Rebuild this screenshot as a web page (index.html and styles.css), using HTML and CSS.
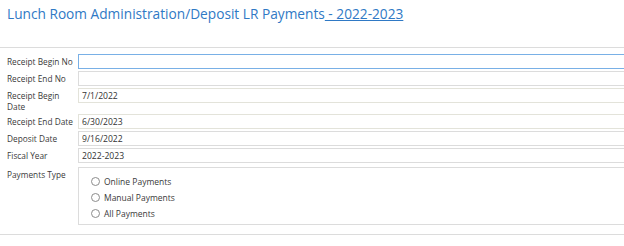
FILE: index.html
```html
<!DOCTYPE html>
<html lang="en">
  <head>
    <meta charset="UTF-8" />
    <title>Deposit LR Payments</title>
    <link rel="stylesheet" href="styles.css">
  </head>
  <body>
    <div class="page-header">
      <h1 class="page-title">
        Lunch Room Administration/Deposit LR Payments<a class="year-link" href="#"> - 2022-2023</a>
      </h1>
    </div>

    <form class="deposit-form">
      <div class="form-row">
        <label class="field-label" for="begin-no">Receipt Begin No</label>
        <input class="field-input field-focus" id="begin-no" type="text" value="" />
      </div>
      <div class="form-row">
        <label class="field-label" for="end-no">Receipt End No</label>
        <input class="field-input" id="end-no" type="text" value="" />
      </div>
      <div class="form-row row-tall">
        <label class="field-label" for="begin-date">Receipt Begin Date</label>
        <input class="field-input field-warm" id="begin-date" type="text" value="7/1/2022" />
      </div>
      <div class="form-row">
        <label class="field-label" for="end-date">Receipt End Date</label>
        <input class="field-input field-warm" id="end-date" type="text" value="6/30/2023" />
      </div>
      <div class="form-row">
        <label class="field-label" for="deposit-date">Deposit Date</label>
        <input class="field-input" id="deposit-date" type="text" value="9/16/2022" />
      </div>
      <div class="form-row">
        <label class="field-label" for="fiscal-year">Fiscal Year</label>
        <input class="field-input" id="fiscal-year" type="text" value="2022-2023" />
      </div>
      <div class="form-row row-radios">
        <span class="field-label">Payments Type</span>
        <div class="radio-box">
          <label class="radio-item"><input class="radio" type="radio" name="ptype" /> Online Payments</label>
          <label class="radio-item"><input class="radio" type="radio" name="ptype" /> Manual Payments</label>
          <label class="radio-item"><input class="radio" type="radio" name="ptype" /> All Payments</label>
        </div>
      </div>
    </form>
  </body>
</html>
```

FILE: styles.css
```css
:root {
  --title-blue: #2f79c5;
  --label-text: #3a3a3a;
  --line: #dcdcdc;
  --line-warm: #e3e3da;
  --focus: #79b0e6;
}

* {
  margin: 0;
  padding: 0;
  box-sizing: border-box;
}

body {
  font-family: "Open Sans", "Noto Sans", sans-serif;
  background: #ffffff;
  color: var(--label-text);
  overflow: hidden;
}

.page-header {
  height: 48px;
  border-bottom: 1px solid var(--line);
  padding: 4px 0 0 7px;
}

.page-title {
  font-size: 13.7px;
  font-weight: 400;
  line-height: 20px;
  color: var(--title-blue);
  white-space: nowrap;
}

.year-link {
  color: var(--title-blue);
  text-decoration: underline;
}

.deposit-form {
  display: flex;
  flex-direction: column;
  gap: 2px;
  padding: 6px 0 9px;
  border-bottom: 1px solid var(--line);
}

.form-row {
  display: grid;
  grid-template-columns: 78px 580px;
  align-items: start;
}

.field-label {
  padding: 2px 0 0 7px;
  font-size: 8.3px;
  line-height: 11px;
  white-space: nowrap;
  color: var(--label-text);
}

.row-tall {
  height: 24px;
}

.row-tall .field-label {
  white-space: normal;
  padding-right: 14px;
}

.field-input {
  height: 15px;
  border: 1px solid var(--line);
  padding: 0 3px;
  font-family: inherit;
  font-size: 8.6px;
  color: #333333;
  background: #ffffff;
  outline: none;
}

.field-focus {
  border-color: var(--focus);
}

.field-warm {
  border-color: var(--line-warm);
}

.row-radios {
  margin-top: 2px;
}

.radio-box {
  height: 58px;
  border: 1px solid var(--line);
  padding: 5px 0 0 12px;
  display: flex;
  flex-direction: column;
}

.radio-item {
  display: flex;
  align-items: center;
  gap: 4px;
  height: 16px;
  font-size: 8.5px;
  color: var(--label-text);
}

.radio {
  appearance: none;
  width: 9px;
  height: 9px;
  border: 1px solid #8c8c8c;
  border-radius: 50%;
  background: #ffffff;
}
```
